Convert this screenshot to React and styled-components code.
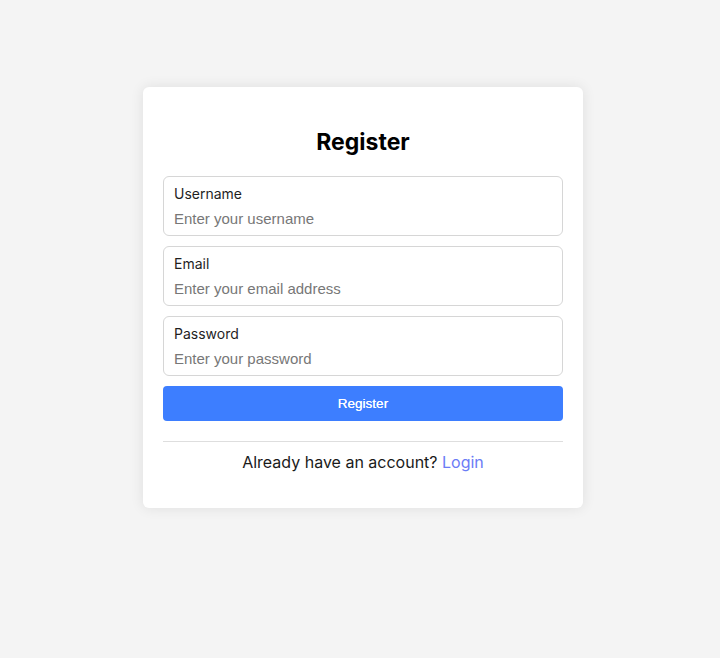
import React from "react";
import styled, { createGlobalStyle } from "styled-components";

const Global = createGlobalStyle`
  html, body { margin: 0; padding: 0; background: #f4f4f4; }
  body { font-family: Inter, "Liberation Sans", Arial, sans-serif; }
  * { box-sizing: border-box; }
`;

const Page = styled.div`
  min-height: 658px;
  display: flex;
  justify-content: center;
  align-items: flex-start;
  padding: 87px 0 0 6px;
`;

const Card = styled.form`
  width: 440px;
  background: #ffffff;
  border-radius: 6px;
  box-shadow: 0 0 14px rgba(0, 0, 0, 0.09);
  padding: 41px 20px 35px;
  display: flex;
  flex-direction: column;
`;

const Title = styled.h2`
  margin: 0 0 19px;
  text-align: center;
  font-family: Inter, sans-serif;
  font-weight: 700;
  font-size: 23px;
  line-height: 29px;
  color: #000;
`;

const Field = styled.label`
  display: flex;
  flex-direction: column;
  border: 1px solid #d6d6d6;
  border-radius: 6px;
  padding: 8px 10px 7px;
  margin-bottom: 10px;
`;

const Label = styled.span`
  font-family: Inter, sans-serif;
  font-size: 14px;
  line-height: 18px;
  color: #1f1f1f;
  margin-bottom: 5px;
`;

const Input = styled.input`
  border: none;
  outline: none;
  padding: 0;
  height: 20px;
  font-family: "Liberation Sans", Arial, sans-serif;
  font-size: 15px;
  color: #222;
  background: transparent;
  &::placeholder { color: #777; }
`;

const Button = styled.button`
  height: 35px;
  border: none;
  border-radius: 4px;
  background: #3d7eff;
  color: #fff;
  font-family: "Liberation Sans", Arial, sans-serif;
  font-size: 13.5px;
  text-shadow: 0 0 0.4px #fff;
  cursor: pointer;
`;

const Divider = styled.hr`
  border: none;
  border-top: 1px solid #dedede;
  margin: 20px 0 9px;
`;

const Footer = styled.p`
  margin: 0;
  text-align: center;
  font-family: Inter, sans-serif;
  font-size: 16px;
  line-height: 22px;
  color: #1a1a1a;
`;

const LoginLink = styled.a`
  color: #6b7cf6;
  text-decoration: none;
`;

const fields = [
  { label: "Username", type: "text", placeholder: "Enter your username" },
  { label: "Email", type: "email", placeholder: "Enter your email address" },
  { label: "Password", type: "password", placeholder: "Enter your password" },
];

export default function App() {
  return (
    <>
      <Global />
      <Page>
        <Card onSubmit={(e) => e.preventDefault()}>
          <Title>Register</Title>
          {fields.map((f) => (
            <Field key={f.label}>
              <Label>{f.label}</Label>
              <Input type={f.type} placeholder={f.placeholder} />
            </Field>
          ))}
          <Button type="submit">Register</Button>
          <Divider />
          <Footer>
            Already have an account? <LoginLink href="#">Login</LoginLink>
          </Footer>
        </Card>
      </Page>
    </>
  );
}
